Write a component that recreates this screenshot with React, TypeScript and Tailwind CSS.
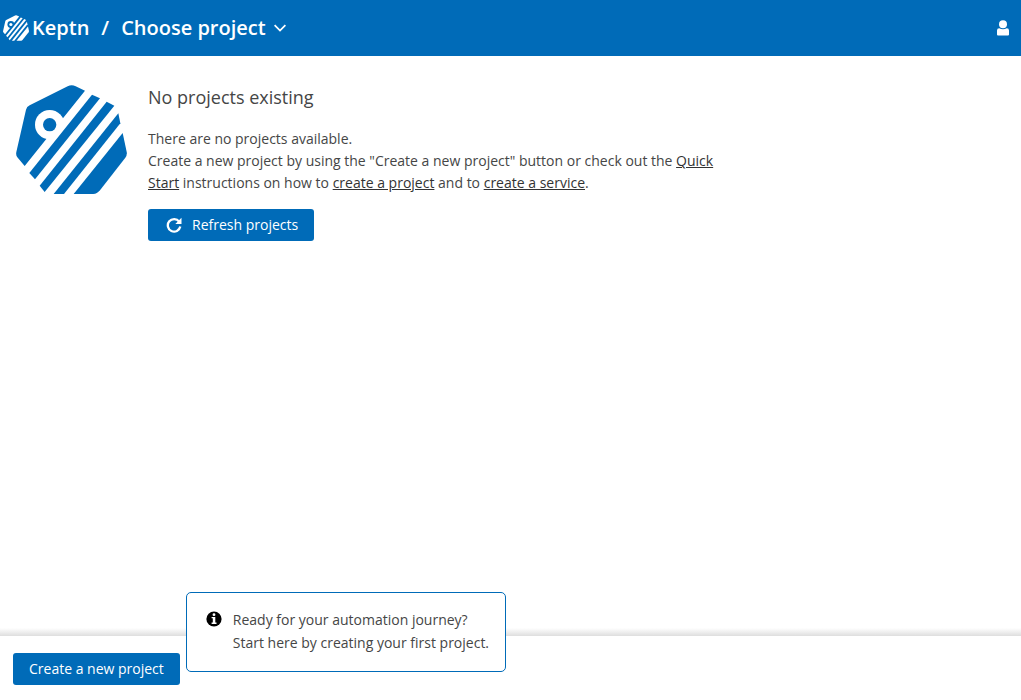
import { useState } from 'react';

interface KeptnLogoProps {
  className?: string;
  ringClassName: string;
}

function KeptnLogo({ className = '', ringClassName }: KeptnLogoProps) {
  return (
    <svg className={className} viewBox="48 30 333 328" fill="currentColor" aria-hidden="true">
      <path d="M74 273 L52 247 Q47 241 49 231 L78 104 Q80 95 89 91 L203 34 Q215 28 227 34 L255 47 Z" />
      <circle cx="149" cy="149" r="44" className={ringClassName} />
      <circle cx="149" cy="149" r="20" />
      <path d="M276 59 L300 70 L105 313 L88 294 Z" />
      <path d="M320 80 L343 92 L134 351 L119 332 Z" />
      <path d="M355 115 L361 145 L192 357 L161 357 Z" />
      <path d="M368 174 L380 230 Q382 240 376 248 L300 346 Q291 357 280 357 L221 357 Z" />
    </svg>
  );
}

function RefreshIcon() {
  return (
    <svg className="size-4" viewBox="0 0 16 16" fill="none" aria-hidden="true">
      <path d="M13.2 4.6 A6.3 6.3 0 1 0 14.3 9.6" stroke="currentColor" strokeWidth="2.3" />
      <path d="M15.5 0.8 V7 H9.3 Z" fill="currentColor" />
    </svg>
  );
}

function UserIcon() {
  return (
    <svg className="h-4 w-3" viewBox="0 0 12 16" fill="currentColor" aria-hidden="true">
      <circle cx="6" cy="4.2" r="4" />
      <path d="M0 10.4 Q0 8.2 2.2 8.2 Q6 10.2 9.8 8.2 Q12 8.2 12 10.4 V14.6 Q12 15.6 11 15.6 H1 Q0 15.6 0 14.6 Z" />
    </svg>
  );
}

function InfoIcon() {
  return (
    <svg className="mt-[3px] size-4 flex-shrink-0" viewBox="0 0 16 16" aria-hidden="true">
      <circle cx="8" cy="8" r="7.6" fill="black" />
      <circle cx="8" cy="3.7" r="1.4" fill="white" />
      <path d="M5.6 6 H9.3 V11.6 H10.5 V12.9 H5.6 V11.6 H6.8 V7.3 H5.6 Z" fill="white" />
    </svg>
  );
}

const LINK_CLASSES = 'underline underline-offset-1 text-[#333333]';

export default function App() {
  const [isMenuOpen, setIsMenuOpen] = useState(false);

  return (
    <div className="flex min-h-screen flex-col bg-white font-['Open_Sans',sans-serif] text-sm text-[#454646]">
      {/* Header */}
      <header className="flex h-14 items-center justify-between bg-[#006bb8] pr-3 pl-[3px] text-white">
        <div className="flex items-center text-xl font-semibold">
          <a href="#" className="flex items-center gap-[3px]">
            <KeptnLogo className="size-[26px]" ringClassName="fill-[#006bb8]" />
            Keptn
          </a>
          <span className="mx-3">/</span>
          <button
            type="button"
            aria-expanded={isMenuOpen}
            onClick={() => setIsMenuOpen(prev => !prev)}
            className="flex items-center gap-2"
          >
            Choose project
            <svg className="size-3" viewBox="0 0 12 12" fill="none" stroke="currentColor" strokeWidth="1.8" aria-hidden="true">
              <path d="M0.6 3.2 L6 8.6 L11.4 3.2" />
            </svg>
          </button>
        </div>
        <button type="button" aria-label="User">
          <UserIcon />
        </button>
      </header>

      {/* Empty state */}
      <main className="flex flex-1 items-start gap-[21px] px-4 pt-7">
        <KeptnLogo className="mt-px w-[111px] flex-shrink-0 text-[#006bb8]" ringClassName="fill-white" />
        <div className="max-w-[570px]">
          <h1 className="mb-[18px] text-lg leading-[26px]">No projects existing</h1>
          <p className="leading-[22px]">There are no projects available.</p>
          <p className="leading-[22px]">
            Create a new project by using the "Create a new project" button or check out the{' '}
            <a href="#" className={LINK_CLASSES}>Quick Start</a> instructions on how to{' '}
            <a href="#" className={LINK_CLASSES}>create a project</a> and to{' '}
            <a href="#" className={LINK_CLASSES}>create a service</a>.
          </p>
          <button
            type="button"
            className="mt-[15px] flex h-8 items-center gap-[10px] rounded-[3px] bg-[#006bb8] pr-4 pl-[18px] text-white"
          >
            <RefreshIcon />
            Refresh projects
          </button>
        </div>
      </main>

      {/* Bottom bar */}
      <div className="h-2 bg-gradient-to-b from-white to-[#dedede]" />
      <footer className="flex h-16 items-center pt-[2px] pl-[13px]">
        <div className="relative">
          <button type="button" className="h-8 rounded-[3px] bg-[#006bb8] px-4 text-white">
            Create a new project
          </button>
          <div className="absolute bottom-[13px] left-full ml-[6px] flex h-20 w-80 gap-[11px] rounded-[5px] border border-[#006bb8] bg-white px-[19px] pt-[15px]">
            <InfoIcon />
            <p className="leading-[23px] whitespace-nowrap">
              Ready for your automation journey?
              <br />
              Start here by creating your first project.
            </p>
          </div>
        </div>
      </footer>
    </div>
  );
}
